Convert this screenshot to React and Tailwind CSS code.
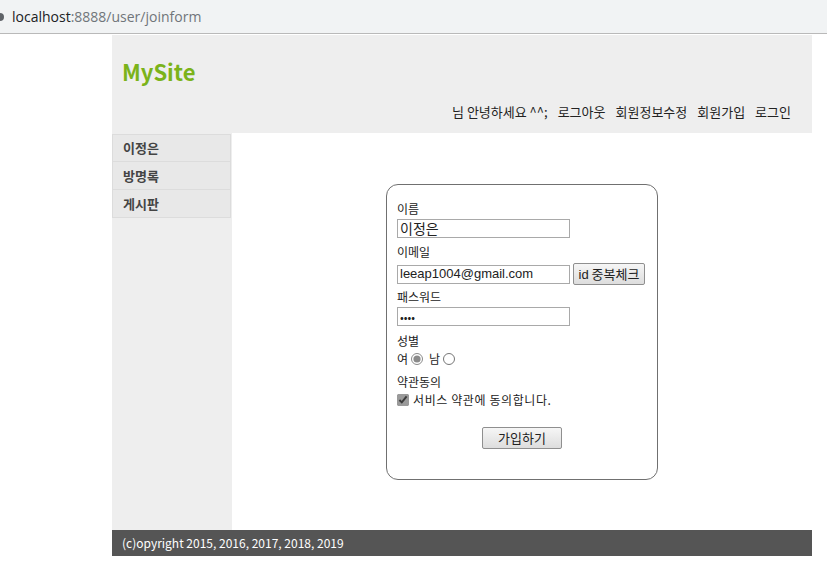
import React from 'react';

const font = { fontFamily: '"Noto Sans CJK KR", "Noto Sans", sans-serif' };

const App = () => {
  return (
    <div className="min-h-[563px] bg-white" style={font}>
      {/* browser address bar */}
      <div className="h-[34px] bg-[#f1f3f4] border-b border-[#b9b9b9] flex items-center">
        <span className="w-[4px] h-[8px] rounded-r-full bg-[#5f6368] mr-[8px]" />
        <span className="text-[14px] text-[#202124]" style={{ fontFamily: '"Open Sans", sans-serif' }}>
          localhost<span className="text-[#70757a]">:8888/user/joinform</span>
        </span>
      </div>

      <div className="ml-[112px] w-[700px] mt-[1px]">
        {/* header */}
        <div className="h-[98px] bg-[#eeeeee] flex flex-col">
          <h1 className="pl-[10px] pt-[20px] text-[22px] font-bold text-[#7bb31a] leading-[32px]">MySite</h1>
          <ul className="mt-auto mb-[12px] flex justify-end gap-[10px] pr-[21px] text-[13px] text-[#222] leading-[18px]">
            <li>님 안녕하세요 ^^;</li>
            <li>로그아웃</li>
            <li>회원정보수정</li>
            <li>회원가입</li>
            <li>로그인</li>
          </ul>
        </div>

        {/* body */}
        <div className="flex h-[397px]">
          <div className="w-[120px] bg-[#eeeeee] pt-[1px]">
            {['이정은', '방명록', '게시판'].map((m) => (
              <div
                key={m}
                className="h-[28px] w-[119px] border border-t-0 first:border-t border-[#dcdcdc] bg-[#e8e8e8] pl-[10px] flex items-center text-[13px] font-semibold text-[#444]"
              >
                {m}
              </div>
            ))}
          </div>

          <div className="flex-1 flex justify-center pt-[51px]">
            <form className="w-[272px] h-[296px] border border-[#707070] rounded-[12px] px-[10px] pt-[15px] text-[12px] text-[#222]">
              <div className="leading-[18px]">이름</div>
              <input
                defaultValue="이정은"
                className="mt-[1px] w-[173px] h-[19px] border border-[#a9a9a9] px-[2px] text-[14px] outline-none"
              />
              <div className="mt-[5px] leading-[18px]">이메일</div>
              <div className="mt-[2px] flex items-center gap-[3px]">
                <input
                  defaultValue="leeap1004@gmail.com"
                  className="w-[173px] h-[19px] border border-[#a9a9a9] px-[2px] text-[13px] outline-none"
                  style={{ fontFamily: '"Liberation Sans", sans-serif' }}
                />
                <button
                  type="button"
                  className="h-[22px] w-[72px] border border-[#8f8f8f] rounded-[2px] bg-gradient-to-b from-[#f6f6f6] to-[#dddddd] text-[13px] leading-[17px]"
                >
                  <span style={{ fontFamily: '"Liberation Sans", sans-serif' }}>id</span> 중복체크
                </button>
              </div>
              <div className="mt-[3px] leading-[18px]">패스워드</div>
              <input
                type="password"
                defaultValue="1234"
                className="mt-[1px] w-[173px] h-[19px] border border-[#a9a9a9] px-[2px] text-[11px] outline-none"
              />
              <div className="mt-[6px] leading-[18px]">성별</div>
              <div className="flex items-center gap-[3px] leading-[18px]">
                <span>여</span>
                <input type="radio" name="g" defaultChecked className="w-[12px] h-[12px] accent-[#8a8a8a]" />
                <span className="ml-[3px]">남</span>
                <input type="radio" name="g" className="w-[12px] h-[12px]" />
              </div>
              <div className="mt-[5px] leading-[18px]">약관동의</div>
              <div className="flex items-center gap-[4px] leading-[18px]">
                <input type="checkbox" defaultChecked className="w-[12px] h-[12px] accent-[#9a9a9a]" />
                <span className="tracking-[0.6px]">서비스 약관에 동의합니다.</span>
              </div>
              <div className="mt-[18px] flex justify-center">
                <button
                  type="button"
                  className="w-[80px] h-[22px] border border-[#8f8f8f] rounded-[2px] bg-gradient-to-b from-[#f6f6f6] to-[#dddddd] text-[13px]"
                >
                  가입하기
                </button>
              </div>
            </form>
          </div>
        </div>

        {/* footer */}
        <div className="h-[26px] bg-[#555555] text-white text-[12px] pl-[10px] flex items-center">
          (c)opyright 2015, 2016, 2017, 2018, 2019
        </div>
      </div>
    </div>
  );
};

export default App;
